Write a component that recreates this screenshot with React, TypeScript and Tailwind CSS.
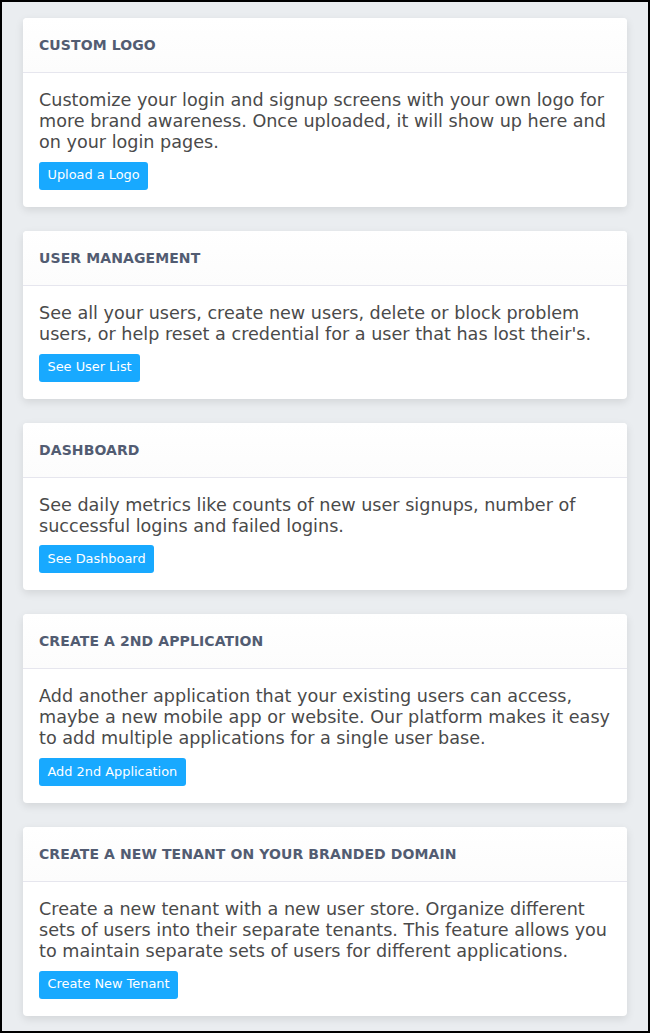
import React from 'react';

const cards = [
  {
    title: 'Custom Logo',
    body: 'Customize your login and signup screens with your own logo for more brand awareness. Once uploaded, it will show up here and on your login pages.',
    action: 'Upload a Logo',
  },
  {
    title: 'User Management',
    body: "See all your users, create new users, delete or block problem users, or help reset a credential for a user that has lost their's.",
    action: 'See User List',
  },
  {
    title: 'Dashboard',
    body: 'See daily metrics like counts of new user signups, number of successful logins and failed logins.',
    action: 'See Dashboard',
  },
  {
    title: 'Create a 2nd Application',
    body: 'Add another application that your existing users can access, maybe a new mobile app or website. Our platform makes it easy to add multiple applications for a single user base.',
    action: 'Add 2nd Application',
  },
  {
    title: 'Create a new tenant on your branded domain',
    body: 'Create a new tenant with a new user store. Organize different sets of users into their separate tenants. This feature allows you to maintain separate sets of users for different applications.',
    action: 'Create New Tenant',
  },
];

function Card({ title, body, action }: { title: string; body: string; action: string }) {
  return (
    <div className="bg-white rounded-[4px] shadow-[0_3px_8px_rgba(0,0,0,0.1)]">
      <div className="px-4 py-[18px] border-b border-[#e6e6ee] bg-gradient-to-b from-white to-[#fcfcfc] rounded-t-[4px]">
        <h2 className="text-[14px] leading-[18px] font-bold uppercase tracking-[0.1px] text-[#525c72]">
          {title}
        </h2>
      </div>
      <div className="px-4 pt-[17px] pb-[17px]">
        <p className="text-[17.6px] leading-[1.2] text-[#4a4a4a]">{body}</p>
        <button className="mt-[8.5px] h-[28px] px-[8.5px] rounded-[3px] bg-[#18a9ff] text-white text-[12.9px] leading-none">
          {action}
        </button>
      </div>
    </div>
  );
}

export default function App() {
  return (
    <div
      className="w-[650px] h-[1033px] border-2 border-black bg-[#eaedf0] overflow-hidden"
      style={{ fontFamily: '"DejaVu Sans", Verdana, sans-serif' }}
    >
      <div className="flex flex-col gap-6 px-[21px] pt-4">
        {cards.map((c) => (
          <Card key={c.title} {...c} />
        ))}
      </div>
    </div>
  );
}
